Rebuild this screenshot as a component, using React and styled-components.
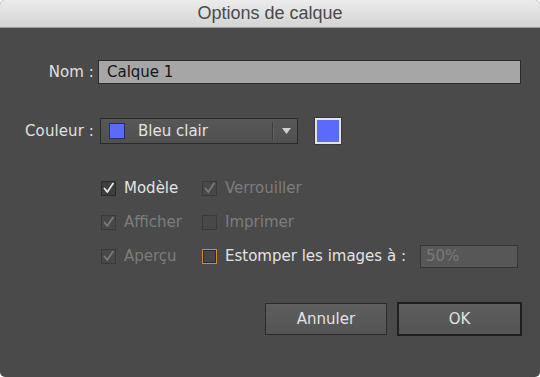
import React from "react";
import styled, { createGlobalStyle, css } from "styled-components";

const Global = createGlobalStyle`
  html, body { margin: 0; padding: 0; background: #ffffff; }
  body { font-family: "DejaVu Sans", "Liberation Sans", sans-serif; }
  * { box-sizing: border-box; }
`;

const Dialog = styled.div`
  width: 540px;
  height: 377px;
  background: #4a4a4a;
  border-radius: 5px;
  overflow: hidden;
  display: flex;
  flex-direction: column;
`;

const TitleBar = styled.div`
  height: 28px;
  flex: none;
  background: linear-gradient(#ececec, #d4d4d4);
  border-bottom: 1px solid #9a9a9a;
  display: flex;
  align-items: center;
  justify-content: center;
  font-family: "Liberation Sans", Arial, sans-serif;
  font-size: 18px;
  color: #4a4a4a;
`;

const Body = styled.div`
  flex: 1;
  display: flex;
  flex-direction: column;
  padding: 32px 18px 0 0;
`;

const FieldRow = styled.div`
  display: grid;
  grid-template-columns: 94px 1fr;
  column-gap: ${(p) => p.$gap || 4}px;
  align-items: center;
  margin-bottom: ${(p) => p.$mb || 0}px;
`;

const Label = styled.div`
  text-align: right;
  color: #e0e0e0;
  font-size: 15px;
  white-space: nowrap;
  letter-spacing: 0.1px;
`;

const TextInput = styled.div`
  height: 24px;
  background: #a6a6a6;
  border: 1px solid #2b2b2b;
  display: flex;
  align-items: center;
  padding-left: 8px;
  color: #151515;
  font-size: 15px;
  margin-right: 1px;
`;

const ColorLine = styled.div`
  display: flex;
  align-items: center;
  gap: 17px;
`;

const Select = styled.div`
  width: 198px;
  height: 26px;
  background: linear-gradient(#575757, #505050);
  border: 1px solid #2a2a2a;
  display: flex;
  align-items: center;
  padding-left: 8px;
`;

const SmallSwatch = styled.div`
  width: 16px;
  height: 16px;
  background: #5a6bfb;
  border: 1px solid #2a2a6a;
  flex: none;
`;

const SelectText = styled.div`
  margin-left: 13px;
  color: #e2e2e2;
  font-size: 15px;
  flex: 1;
`;

const SelectArrow = styled.div`
  width: 25px;
  height: 18px;
  border-left: 1px solid #3c3c3c;
  box-shadow: inset 1px 0 0 #606060;
  display: flex;
  align-items: center;
  justify-content: center;
  padding-left: 2px;
`;

const BigSwatch = styled.div`
  width: 26px;
  height: 26px;
  background: #5a6bfb;
  border: 2px solid #e4e4e4;
  outline: 1px solid #3a3a3a;
`;

const Options = styled.div`
  display: grid;
  grid-template-columns: 101px 101px 1fr;
  row-gap: 10px;
  margin-top: 32px;
`;

const Spacer = styled.div``;

const Check = styled.label`
  display: flex;
  align-items: center;
  gap: 8px;
  height: 24px;
  font-size: 15px;
  white-space: nowrap;
  color: ${(p) => (p.$disabled ? "#7d7d7d" : "#e2e2e2")};
`;

const Box = styled.span`
  width: 15px;
  height: 15px;
  flex: none;
  display: flex;
  align-items: center;
  justify-content: center;
  background: ${(p) => (p.$disabled ? "#484848" : "#3e3e3e")};
  border: 1px solid ${(p) => (p.$disabled ? "#3a3a3a" : "#2a2a2a")};
  ${(p) =>
    p.$focus &&
    css`
      border: 1.5px solid #d08a3c;
      background: #474747;
      box-shadow: inset 0 0 0 1px #2c2c2c;
    `}
`;

const FadeInput = styled.div`
  width: 98px;
  height: 23px;
  margin-left: 6px;
  background: #575757;
  border: 1px solid #363636;
  display: flex;
  align-items: center;
  padding-left: 5px;
  color: #7a7a7a;
  font-size: 15px;
`;

const Buttons = styled.div`
  display: flex;
  justify-content: flex-end;
  gap: 10px;
  margin-top: 34px;
`;

const Button = styled.div`
  width: ${(p) => (p.$default ? 125 : 122)}px;
  height: ${(p) => (p.$default ? 34 : 32)}px;
  margin-top: ${(p) => (p.$default ? 0 : 1)}px;
  background: linear-gradient(#5e5e5e, #545454);
  border: ${(p) => (p.$default ? "2px solid #202020" : "1px solid #2c2c2c")};
  display: flex;
  align-items: center;
  justify-content: center;
  color: #e2e2e2;
  font-size: 15px;
`;

const Tick = ({ color }) => (
  <svg width="13" height="13" viewBox="0 0 13 13">
    <path d="M2.5 6.5 L5.3 10 L11 1.5" fill="none" stroke={color} strokeWidth="1.8" strokeLinecap="round" strokeLinejoin="round" />
  </svg>
);

const CheckItem = ({ label, checked, disabled, focus, children }) => (
  <Check $disabled={disabled}>
    <Box $disabled={disabled} $focus={focus}>
      {checked && <Tick color={disabled ? "#7a7a7a" : "#e6e6e6"} />}
    </Box>
    {label}
    {children}
  </Check>
);

export default function App() {
  return (
    <>
      <Global />
      <Dialog>
        <TitleBar>Options de calque</TitleBar>
        <Body>
          <FieldRow $mb={34} $gap={4}>
            <Label>Nom :</Label>
            <TextInput>Calque 1</TextInput>
          </FieldRow>
          <FieldRow $gap={6}>
            <Label>Couleur :</Label>
            <ColorLine>
              <Select>
                <SmallSwatch />
                <SelectText>Bleu clair</SelectText>
                <SelectArrow>
                  <svg width="9" height="6" viewBox="0 0 9 6">
                    <path d="M0 0 H9 L4.5 6 Z" fill="#d0d0d0" />
                  </svg>
                </SelectArrow>
              </Select>
              <BigSwatch />
            </ColorLine>
          </FieldRow>
          <Options>
            <Spacer />
            <CheckItem label="Modèle" checked />
            <CheckItem label="Verrouiller" checked disabled />
            <Spacer />
            <CheckItem label="Afficher" checked disabled />
            <CheckItem label="Imprimer" disabled />
            <Spacer />
            <CheckItem label="Aperçu" checked disabled />
            <CheckItem label="Estomper les images à :" focus>
              <FadeInput>50%</FadeInput>
            </CheckItem>
          </Options>
          <Buttons>
            <Button>Annuler</Button>
            <Button $default>OK</Button>
          </Buttons>
        </Body>
      </Dialog>
    </>
  );
}
